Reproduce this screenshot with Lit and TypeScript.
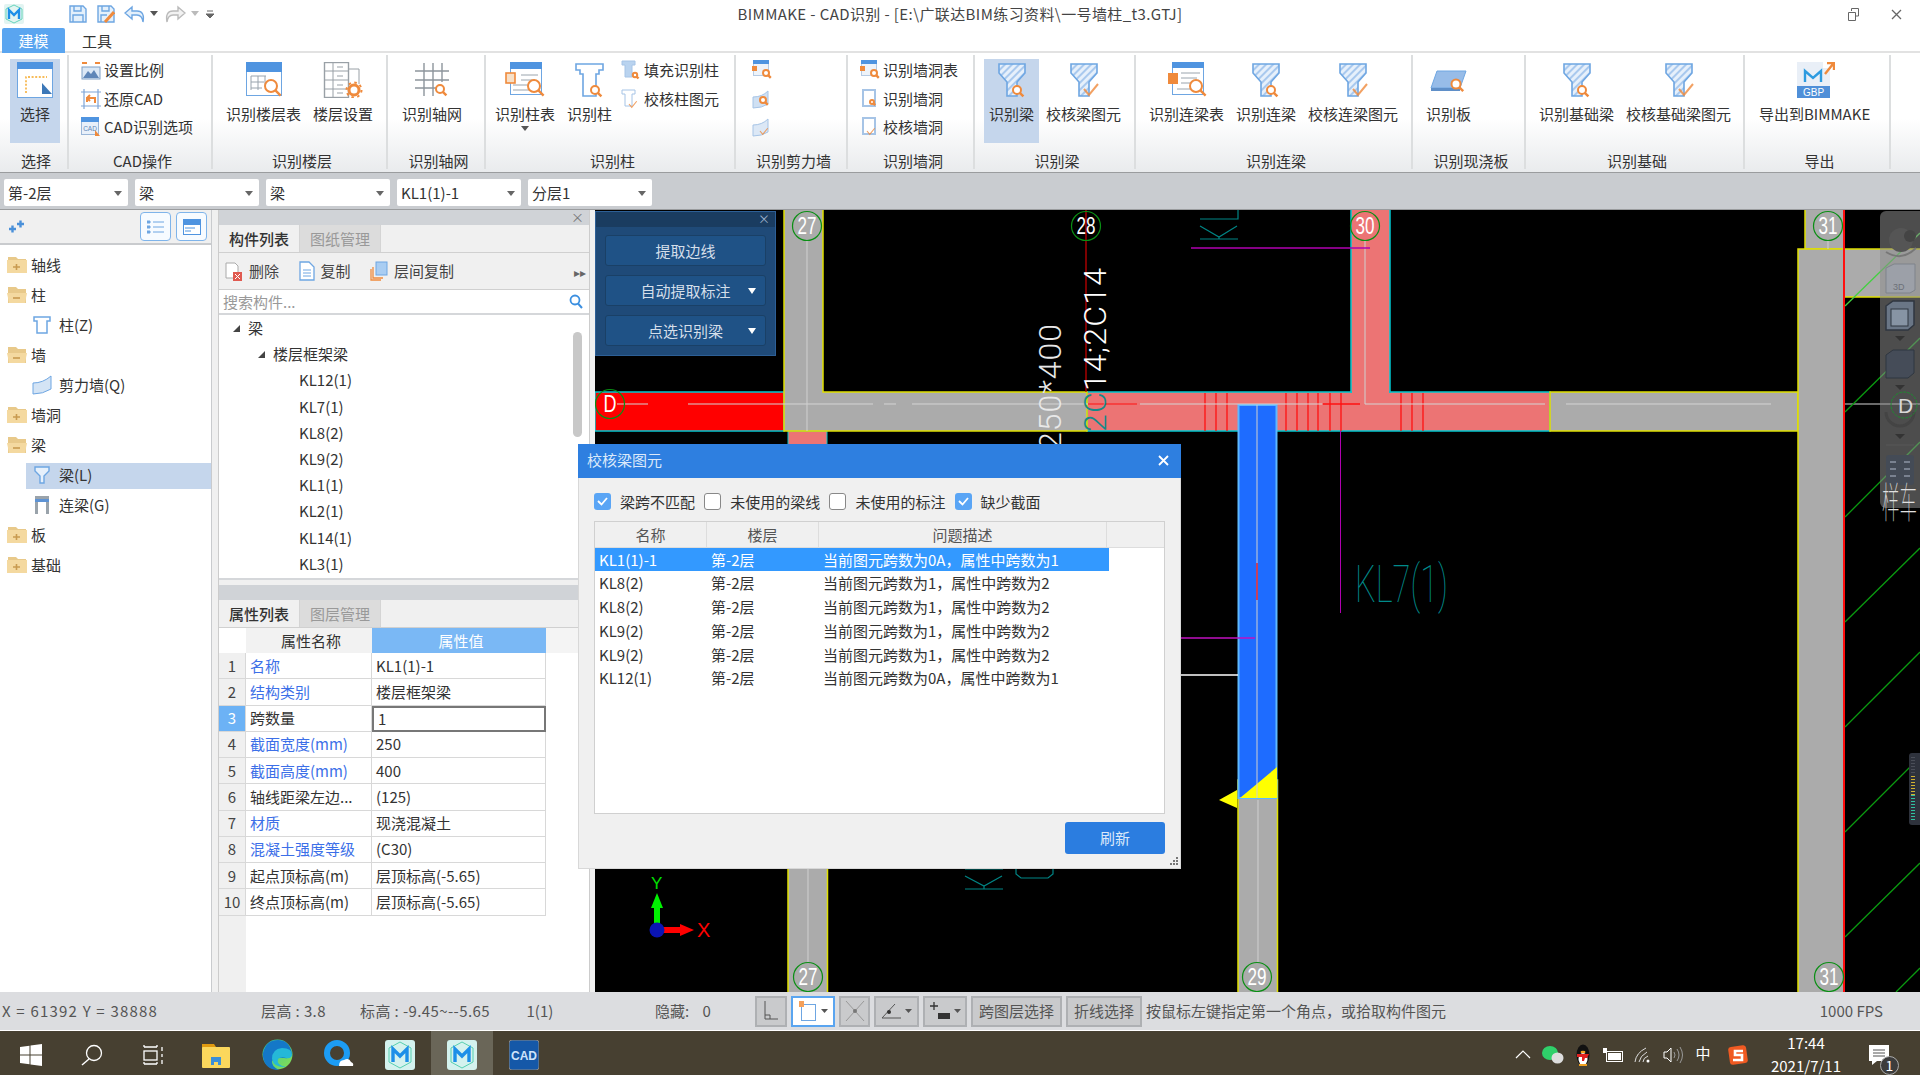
import { css, html, LitElement, svg } from 'lit'
import { customElement } from 'lit/decorators.js'
import { styleMap } from 'lit/directives/style-map.js'

const BLUE = '#6ea6e2'
const ORANGE = '#ef8a3c'

const mag = (x: number, y: number, r = 5) => svg`
  <circle cx=${x} cy=${y} r=${r} fill="#fff" stroke=${ORANGE} stroke-width="2" />
  <line x1=${x + r * 0.7} y1=${y + r * 0.7} x2=${x + r * 1.6} y2=${y + r * 1.6} stroke=${ORANGE} stroke-width="2.4" />
`
const tick = (x: number, y: number, s = 1) => svg`
  <polyline points="${x},${y} ${x + 5 * s},${y + 6 * s} ${x + 14 * s},${y - 5 * s}" fill="none" stroke=${ORANGE} stroke-width=${2 * s} opacity="0.8" />
`
const wrap = (w: number, h: number, inner: unknown) =>
  html`<svg width=${w} height=${h} viewBox="0 0 ${w} ${h}">${inner}</svg>`

const beamShape = (x = 6, y = 1) => svg`
  <defs>
    <pattern id="hatch" width="5" height="5" patternUnits="userSpaceOnUse" patternTransform="rotate(45)">
      <rect width="5" height="5" fill="#e6f0fb" /><rect width="2" height="5" fill="#a9c9ee" />
    </pattern>
  </defs>
  <path transform="translate(${x} ${y})" d="M1 1H27V10L19 19V33H9V19L1 10Z" fill="url(#hatch)" stroke=${BLUE} stroke-width="1.6" />
`
const columnShape = (x = 5, y = 1) => svg`
  <path transform="translate(${x} ${y})" d="M1 1H28V7H24V11H21V33H8V11H5V7H1Z" fill="#fff" stroke=${BLUE} stroke-width="1.6" />
`

const large: Record<string, () => unknown> = {
  select: () => wrap(40, 36, svg`
    <rect x="2.5" y="0.5" width="35" height="35" fill="#fff" stroke=${BLUE} />
    <rect x="2" y="0" width="36" height="7" fill="#4f94e0" />
    <path d="M11 31V15H32" fill="none" stroke="#f5a623" stroke-width="1.4" stroke-dasharray="2 1.6" />
    <path d="M27 21L37 32H27Z" fill="#3c78b8" />
  `),
  tableSearch: () => wrap(40, 36, svg`
    <rect x="2.5" y="0.5" width="35" height="33" fill="#fff" stroke=${BLUE} />
    <rect x="2" y="0" width="36" height="10" fill="#4f94e0" />
    <path d="M7 14H22M7 20H20M7 26H18M7 14V28M14 14V28M21 14V24" stroke="#9aa4ad" fill="none" />
    ${mag(27, 24, 6)}
  `),
  floor: () => wrap(40, 36, svg`
    <rect x="1.5" y="0.5" width="24" height="35" fill="#fff" stroke="#99a0a6" stroke-width="1.4" />
    <path d="M1 9H25M1 18H25M1 27H25M10 1V35M14 5H20M14 14H20M14 23H20M14 31H20M25 7H36V22" stroke="#99a0a6" fill="none" />
    <circle cx="31" cy="28" r="5" fill="#fff" stroke=${ORANGE} stroke-width="3" />
    <circle cx="31" cy="28" r="7.5" fill="none" stroke=${ORANGE} stroke-width="2" stroke-dasharray="2.5 3.4" />
  `),
  grid: () => wrap(40, 36, svg`
    <path d="M3 9H37M3 18H37M3 26H28M12 1V34M21 1V34M30 1V20" stroke="#8d959c" stroke-width="1.4" fill="none" />
    ${mag(28, 27, 4)}
  `),
  colTable: () => wrap(40, 36, svg`
    <rect x="5.5" y="0.5" width="31" height="32" fill="#fff" stroke=${BLUE} />
    <rect x="5" y="0" width="32" height="7" fill="#4f94e0" />
    <path d="M16 13H33M16 18H30M8 23H26M8 28H24" stroke="#9aa4ad" />
    <rect x="1" y="11" width="9" height="10" fill="#f7e0c8" stroke=${ORANGE} stroke-width="1.6" />
    ${mag(29, 24, 6)}
  `),
  column: () => wrap(40, 36, svg`${columnShape()}${mag(25, 28, 4)}`),
  beamFind: () => wrap(40, 36, svg`${beamShape()}${mag(25, 28, 4)}`),
  beamCheck: () => wrap(40, 36, svg`${beamShape()}${tick(20, 27)}`),
  linkTable: () => wrap(40, 36, svg`
    <rect x="5.5" y="0.5" width="31" height="32" fill="#fff" stroke=${BLUE} />
    <rect x="5" y="0" width="32" height="6" fill="#4f94e0" />
    <path d="M14 11H33M14 16H30M14 21H26M10 27H24" stroke="#9aa4ad" />
    <rect x="1" y="11" width="10" height="11" fill=${ORANGE} />
    ${mag(29, 24, 6)}
  `),
  slab: () => wrap(40, 36, svg`
    <path d="M8 9H37L31 26H2Z" fill="#97bce8" stroke=${BLUE} />
    <path d="M2 26H31V29H2Z" fill="#5f8fc8" />
    ${mag(27, 22, 4.5)}
  `),
  gbp: () => wrap(40, 36, svg`
    <path d="M2 0H28V6H35V36H2Z" fill="#e9eff7" />
    <rect x="2" y="24" width="33" height="12" fill="#4f8fd8" />
    <text x="18.5" y="33.5" text-anchor="middle" font-size="10" fill="#fff" font-family="Liberation Sans, sans-serif">GBP</text>
    <path d="M10 20V9L18 16L26 9V20" fill="none" stroke="#2d9be0" stroke-width="2.4" />
    <path d="M30 12L38 2M32 1H39V8" fill="none" stroke=${ORANGE} stroke-width="2.4" />
  `),
}

const small: Record<string, () => unknown> = {
  scale: () => wrap(20, 20, svg`
    <path d="M1 3H6M14 3H19" stroke=${ORANGE} stroke-width="2" />
    <rect x="1" y="7" width="18" height="12" fill="#dbe8f6" stroke="#7fa0c6" />
    <path d="M2 18L7 11L10 14L13 10L18 18Z" fill="#5e86b8" />
  `),
  restore: () => wrap(20, 20, svg`
    <path d="M0 3H20M3 0V20M0 17H20M17 0V20" stroke="#7fa6d8" stroke-width="1.2" />
    <path d="M6 13V9H14V14M6 9L9 6M6 9L9 12" fill="none" stroke=${ORANGE} stroke-width="2" />
  `),
  cadOpt: () => wrap(20, 20, svg`
    <rect x="0.5" y="0.5" width="17" height="17" fill="#e8f0fa" stroke="#9ab6d8" />
    <rect width="18" height="5" fill="#4f94e0" />
    <text x="9" y="14" text-anchor="middle" font-size="6.5" fill="#5e86b8" font-family="Liberation Sans, sans-serif">CAD</text>
    <path d="M14 13L19 19H14Z" fill=${ORANGE} />
  `),
  colFill: () => wrap(20, 20, svg`
    <path d="M1 1H14V5H11V17H4V5H1Z" fill="#b9d3ef" stroke="#a6c4e6" />${mag(14, 15, 2.2)}
  `),
  colCheck: () => wrap(20, 20, svg`
    <path d="M1 1H14V5H11V17H4V5H1Z" fill="#fff" stroke="#a6c4e6" />${tick(8, 15, 0.55)}
  `),
  shearTable: () => wrap(20, 20, svg`
    <rect x="1.5" y="0.5" width="15" height="15" fill="#eef3f9" stroke="#b6cbe4" />
    <rect x="1" width="16" height="4" fill="#4f94e0" />
    <rect y="6" width="5" height="5" fill=${ORANGE} />${mag(14, 13, 3)}
  `),
  wall: () => wrap(20, 20, svg`
    <path d="M1 8Q10 8 16 2V15Q10 19 1 19Z" fill="#cfe0f3" stroke="#a6c4e6" />${mag(11, 11, 3)}
  `),
  wallCheck: () => wrap(20, 20, svg`
    <path d="M1 8Q10 8 16 2V15Q10 19 1 19Z" fill="#dce8f6" stroke="#a6c4e6" />${tick(8, 14, 0.55)}
  `),
  hole: () => wrap(20, 20, svg`
    <path d="M3 1H15V17H3Z" fill="#fff" stroke="#a6c4e6" stroke-width="2" />${mag(12, 13, 2)}
  `),
  holeCheck: () => wrap(20, 20, svg`
    <path d="M3 1H15V17H3Z" fill="#fff" stroke="#a6c4e6" stroke-width="2" />${tick(7, 14, 0.55)}
  `),
}

interface RibbonItem {
  kind: 'large' | 'small'
  icon?: string
  label?: string
  active?: boolean
  caret?: boolean
}
type RibbonEntry = RibbonItem | RibbonItem[]

const L = (label: string, icon: string, extra: Partial<RibbonItem> = {}): RibbonItem => ({ kind: 'large', label, icon, ...extra })
const S = (icon: string, label = ''): RibbonItem => ({ kind: 'small', icon, label })

const ribbon: { label: string; width: number; pad: number; items: RibbonEntry[] }[] = [
  { label: '选择', width: 69, pad: 10, items: [L('选择', 'select', { active: true })] },
  { label: 'CAD操作', width: 144, pad: 6, items: [[S('scale', '设置比例'), S('restore', '还原CAD'), S('cadOpt', 'CAD识别选项')]] },
  { label: '识别楼层', width: 175, pad: 8, items: [L('识别楼层表', 'tableSearch'), L('楼层设置', 'floor')] },
  { label: '识别轴网', width: 98, pad: 9, items: [L('识别轴网', 'grid')] },
  { label: '识别柱', width: 250, pad: 4, items: [L('识别柱表', 'colTable', { caret: true }), L('识别柱', 'column'), [S('colFill', '填充识别柱'), S('colCheck', '校核柱图元')]] },
  { label: '识别剪力墙', width: 112, pad: 10, items: [[S('shearTable'), S('wall'), S('wallCheck')]] },
  { label: '识别墙洞', width: 127, pad: 6, items: [[S('shearTable', '识别墙洞表'), S('hole', '识别墙洞'), S('holeCheck', '校核墙洞')]] },
  { label: '识别梁', width: 161, pad: 9, items: [L('识别梁', 'beamFind', { active: true }), L('校核梁图元', 'beamCheck')] },
  { label: '识别连梁', width: 277, pad: 8, items: [L('识别连梁表', 'linkTable'), L('识别连梁', 'beamFind'), L('校核连梁图元', 'beamCheck')] },
  { label: '识别现浇板', width: 113, pad: 8, items: [L('识别板', 'slab')] },
  { label: '识别基础', width: 219, pad: 8, items: [L('识别基础梁', 'beamFind'), L('校核基础梁图元', 'beamCheck')] },
  { label: '导出', width: 146, pad: 9, items: [L('导出到BIMMAKE', 'gbp')] },
]

const selects = ['第-2层', '梁', '梁', 'KL1(1)-1', '分层1']

const tree = [
  { label: '轴线', open: false },
  { label: '柱', open: true },
  { label: '柱(Z)', child: 'col' },
  { label: '墙', open: true },
  { label: '剪力墙(Q)', child: 'wall' },
  { label: '墙洞', open: false },
  { label: '梁', open: true },
  { label: '梁(L)', child: 'beam', selected: true },
  { label: '连梁(G)', child: 'link' },
  { label: '板', open: false },
  { label: '基础', open: false },
]

const parts = ['KL12(1)', 'KL7(1)', 'KL8(2)', 'KL9(2)', 'KL1(1)', 'KL2(1)', 'KL14(1)', 'KL3(1)']

const props = [
  ['名称', 'KL1(1)-1', true],
  ['结构类别', '楼层框架梁', true],
  ['跨数量', '1', false],
  ['截面宽度(mm)', '250', true],
  ['截面高度(mm)', '400', true],
  ['轴线距梁左边...', '(125)', false],
  ['材质', '现浇混凝土', true],
  ['混凝土强度等级', '(C30)', true],
  ['起点顶标高(m)', '层顶标高(-5.65)', false],
  ['终点顶标高(m)', '层顶标高(-5.65)', false],
] as const

const issues = [
  ['KL1(1)-1', '第-2层', '当前图元跨数为0A，属性中跨数为1'],
  ['KL8(2)', '第-2层', '当前图元跨数为1，属性中跨数为2'],
  ['KL8(2)', '第-2层', '当前图元跨数为1，属性中跨数为2'],
  ['KL9(2)', '第-2层', '当前图元跨数为1，属性中跨数为2'],
  ['KL9(2)', '第-2层', '当前图元跨数为1，属性中跨数为2'],
  ['KL12(1)', '第-2层', '当前图元跨数为0A，属性中跨数为1'],
]

const checks: [string, boolean][] = [
  ['梁跨不匹配', true],
  ['未使用的梁线', false],
  ['未使用的标注', false],
  ['缺少截面', true],
]

const folder = (open: boolean) => wrap(20, 20, svg`
  <path d="M1 2H9L11 4H19V18H1Z" fill="#e8c98a" />
  <path d=${open ? 'M0 8H20L18 18H2Z' : 'M0 5H20V18H0Z'} fill="#f4d9a0" />
  <path d=${open ? 'M6 13H13' : 'M6 12H13M9.5 9V15'} stroke="#c89a50" stroke-width="1.6" />
`)

const childIcon = (kind?: string) => {
  if (kind === 'col') return wrap(20, 20, svg`<path d="M2 2H18V6H15V18H5V6H2Z" fill="#fff" stroke=${BLUE} stroke-width="1.5" />`)
  if (kind === 'wall') return wrap(20, 20, svg`<path d="M1 8Q11 8 19 1V14Q11 19 1 19Z" fill="#d4e4f5" stroke=${BLUE} />`)
  if (kind === 'beam') return wrap(20, 20, svg`<path d="M3 2H17V6L12 11V18H8V11L3 6Z" fill="#e6f0fb" stroke=${BLUE} stroke-width="1.4" />`)
  return wrap(20, 20, svg`<path d="M3 1H17V19H14V7H6V19H3Z" fill="#9aa3ab" /><rect x="3" y="4" width="14" height="3" fill="#5e93d4" />`)
}

const bubble = (x: number, y: number, t: string, r = 14.5, tw = 19) => svg`
  <circle cx=${x} cy=${y} r=${r} fill="none" stroke="#0a8f14" stroke-width="1.2" />
  <text x=${x - tw / 2} y=${y + 8} font-size="23" fill="#fff" textLength=${tw} lengthAdjust="spacingAndGlyphs" font-family="Liberation Sans, sans-serif">${t}</text>
`

const taskApp = () => html`
  <svg width="30" height="30" viewBox="0 0 30 30">
    <rect width="30" height="30" rx="3" fill="#d4f2ee" />
    <path d="M15 2L26 8V22L15 28L4 22V8Z" fill="none" stroke="#57d0b0" />
    <path d="M8 22V9L15 16L22 9V22" fill="none" stroke="#1d8fe8" stroke-width="3.4" />
  </svg>
`

@customElement('app-root')
export class AppRoot extends LitElement {
  static styles = css`
    :host {
      position: relative;
      display: flex;
      flex-direction: column;
      width: 1920px;
      height: 1075px;
      overflow: hidden;
      background: #f0f0f0;
      color: #333;
      font: 15px/20px 'Noto Sans CJK SC', 'Liberation Sans', sans-serif;
      white-space: nowrap;
    }
    svg { display: block; flex: none; }

    .titlebar {
      display: grid;
      grid-template-columns: 1fr auto 1fr;
      align-items: center;
      height: 28px;
      background: #fff;
    }
    .quick { display: flex; align-items: center; padding-left: 4px; }
    .title { font-size: 15px; color: #444; letter-spacing: 0.4px; }
    .winbtns { display: flex; justify-content: flex-end; align-items: center; gap: 32px; padding-right: 18px; }

    .tabs { display: flex; height: 25px; background: #fff; padding-left: 2px; border-bottom: 2px solid #e2e2e2; box-sizing: border-box; }
    .tab { width: 63px; text-align: center; line-height: 25px; height: 25px; }
    .tab.on { background: #5aa5f0; color: #fff; border-radius: 2px 2px 0 0; }
    .tab.off { width: 52px; margin-left: 6px; }

    .ribbon {
      display: flex;
      height: 120px;
      background: linear-gradient(#fff 0 55%, #e9ebed);
      border-bottom: 1px solid #9a9c9e;
      box-sizing: border-box;
    }
    .group { display: flex; flex-direction: column; flex: none; box-sizing: border-box; border-right: 2px solid #dcdedf; margin: 2px 0 3px; }
    .group-body { display: flex; flex: none; height: 88px; padding-top: 4px; box-sizing: border-box; }
    .group-label { flex: none; text-align: center; line-height: 20px; margin-top: 8px; padding-left: 5px; color: #333; }
    .big {
      position: relative;
      display: flex;
      flex-direction: column;
      align-items: center;
      flex: none;
      height: 84px;
      padding: 3px 5px 0;
      box-sizing: border-box;
    }
    .big + .big { margin-left: 2px; }
    .big + .smalls { margin-left: -2px; }
    .big.on { background: #c5d6ec; }
    .big span { margin-top: 6px; }
    .caret { position: absolute; left: 50%; top: 67px; margin-left: -4px; width: 0; height: 0; border: 4px solid transparent; border-top: 5px solid #555; }
    .smalls { display: flex; flex-direction: column; gap: 8.5px; padding: 1px 0 0 6px; }
    .small { display: flex; align-items: center; gap: 3px; height: 20px; }

    .selectbar { display: flex; gap: 7px; height: 37px; padding: 6px 4px 3px; background: #c9ccd0; border-bottom: 1px solid #9a9c9e; box-sizing: border-box; }
    .select { position: relative; width: 124px; background: #fff; border-radius: 2px; line-height: 28px; padding-left: 4px; box-sizing: border-box; }
    .select i { position: absolute; right: 6px; top: 12px; border: 4px solid transparent; border-top: 5px solid #666; }

    .main { display: flex; height: 782px; }
    .left { width: 211px; flex: none; display: flex; flex-direction: column; border-right: 1px solid #c9cbce; box-sizing: content-box; margin-right: 6px; }
    .left-head { display: flex; align-items: center; height: 35px; padding: 0 4px 0 8px; background: #f0f0f0; border-bottom: 2px solid #c9cbce; box-sizing: border-box; }
    .head-btn { width: 31px; height: 29px; margin-left: 5px; border: 1px solid #7fb4ea; border-radius: 4px; box-sizing: border-box; display: flex; align-items: center; justify-content: center; background: #f7fbff; }
    .head-btn:first-of-type { margin-left: auto; }
    .left-tree { flex: 1; background: #fff; padding-top: 5px; }
    .t-row { display: flex; align-items: center; gap: 4px; height: 30px; padding-left: 7px; }
    .t-row.child { padding-left: 32px; gap: 7px; }
    .t-row.sel { position: relative; background: linear-gradient(#c5d6ec, #c5d6ec) 26px 3px / 185px 26px no-repeat; }

    .mid { width: 372px; flex: none; display: flex; flex-direction: column; margin-right: 5px; background: #f0f0f0; border-left: 1px solid #ccc; border-right: 1px solid #ccc; box-sizing: border-box; }
    .mid-title { position: relative; height: 15px; background: #d0d3d7; flex: none; }
    .mid-title b { position: absolute; right: 5px; top: -3px; font-weight: 400; font-size: 13px; color: #777; }
    .mid-tabs { display: flex; height: 28px; background: #f0f0f0; border-bottom: 1px solid #d0d0d0; flex: none; box-sizing: border-box; }
    .mid-tab { width: 81px; text-align: center; line-height: 27px; border-right: 1px solid #d4d4d4; box-sizing: border-box; font-weight: 500; }
    .mid-tab.off { background: #dcdcdc; color: #999; font-weight: 400; }
    .tools { display: flex; align-items: center; height: 37px; padding-left: 6px; color: #444; flex: none; position: relative; box-sizing: border-box; border-bottom: 1px solid #d0d0d0; }
    .tool { display: flex; align-items: center; gap: 6px; margin-right: 19.5px; }
    .more { position: absolute; right: 3px; top: 9px; font-size: 12px; color: #666; }
    .search { display: flex; align-items: center; justify-content: space-between; height: 25px; padding: 0 6px 0 4px; background: #fff; color: #999; border-bottom: 2px solid #d5d7da; flex: none; box-sizing: border-box; }
    .part-tree { position: relative; height: 265px; background: #fff; border-bottom: 2px solid #d5d7da; box-sizing: border-box; padding-top: 0; overflow: hidden; flex: none; }
    .p-row { display: flex; align-items: center; height: 26.2px; gap: 8px; }
    .arrow { width: 0; height: 0; border-left: 7px solid transparent; border-bottom: 7px solid #444; }
    .scroll { position: absolute; right: 7px; top: 17px; width: 9px; height: 105px; border-radius: 5px; background: #c8c8c8; }
    .split { height: 5px; background: #f0f0f0; flex: none; }

    .prop { display: grid; grid-template-columns: 27px 126px 174px 1fr; grid-template-rows: 25px; grid-auto-rows: 26.26px; flex: none; background: #fff; }
    .prop > div { display: flex; align-items: center; box-sizing: border-box; padding-left: 4px; border-bottom: 1px solid #d8d8d8; border-right: 1px solid #d8d8d8; color: #333; }
    .prop .corner { background: #fff; border: 0; }
    .prop .hn { justify-content: center; background: #f2f2f2; border: 0; }
    .prop .hv { justify-content: center; background: #7ab8f5; color: #fff; border: 0; }
    .prop .fill { background: #f4f4f4; border: 0; }
    .prop .rest { border: 0; background: #fff; }
    .prop .num { justify-content: center; padding: 0; background: #f0f0f0; color: #444; }
    .prop .num.sel { background: #6cb2f5; color: #fff; }
    .prop .link { color: #3c6fe8; }
    .prop .edit { border: 2px solid #777; }
    .prop-rest { flex: 1; background: linear-gradient(90deg, #f0f0f0 27px, #fff 27px); }

    .canvas { position: relative; flex: 1; background: #000; overflow: hidden; border-top: 0; }
    .float { position: absolute; left: 0; top: 1px; width: 181px; height: 145px; background: #1f4a78; border: 1px solid #2d5f96; box-sizing: border-box; color: #d5dfea; }
    .float-head { position: relative; height: 15px; background: #1a3c60; }
    .float-head b { position: absolute; right: 5px; top: -3px; font-weight: 400; font-size: 12px; color: #9cb3cc; }
    .float-btns { display: flex; flex-direction: column; gap: 9px; padding: 8px 9px 0; }
    .float-btn { position: relative; height: 31px; line-height: 30px; text-align: center; border-radius: 3px; background: #1f5286; border: 1px solid #1a4066; box-sizing: border-box; }
    .float-btn i { position: absolute; right: 9px; top: 12px; border: 4px solid transparent; border-top: 6px solid #fff; }

    .status { display: flex; align-items: center; height: 38px; background: #dcdde0; color: #555; flex: none; border-bottom: 1px solid #fff; box-sizing: content-box; }
    .st-a { width: 259px; padding-left: 2px; letter-spacing: 1.2px; }
    .st-b { width: 99px; letter-spacing: 0.4px; }
    .st-c { width: 166.5px; letter-spacing: 0.4px; }
    .st-d { width: 128.5px; }
    .st-e { width: 100px; }
    .sbtn { display: flex; align-items: center; justify-content: center; height: 31px; margin-right: 4px; background: #c9cacc; border: 2px solid #aeb0b3; box-sizing: border-box; color: #555; gap: 4px; }
    .sbtn.on { background: #fff; border-color: #5aa5f0; }
    .fps { margin-left: auto; padding-right: 37px; }

    .taskbar { display: flex; align-items: center; height: 44px; background: #474031; color: #fff; flex: none; }
    .cell { display: flex; align-items: center; justify-content: center; width: 61.6px; height: 44px; flex: none; }
    .cell svg { margin-top: 3px; }
    .cell.on { background: #6a6658; }
    .tray { display: flex; align-items: center; margin-left: auto; padding-right: 21px; }
    .tray > div { display: flex; align-items: center; justify-content: center; width: 30px; height: 44px; }
    .tray > div svg { margin-top: 3px; }
    .tray .sogou { margin-left: 5px; }
    .tray .clock { display: block; width: 106px; text-align: center; line-height: 23px; padding-top: 0; }
    .tray .note { position: relative; width: 40px; }
    .badge { position: absolute; left: 21px; top: 25px; width: 17px; height: 17px; border: 1px solid #aaa; border-radius: 50%; background: #3c3c3c; font-size: 14px; line-height: 17px; text-align: center; }

    .dialog { position: absolute; left: 578px; top: 444px; width: 603px; height: 425px; display: flex; flex-direction: column; background: #f0f0f0; border: 1px solid #d8d8d8; box-sizing: border-box; }
    .dlg-title { display: flex; align-items: center; justify-content: space-between; flex: none; height: 34px; padding: 0 12px 2px 9px; background: #2e7fe0; color: #dbe9fa; margin: -1px -1px 0; box-sizing: border-box; }
    .dlg-checks { display: flex; align-items: center; height: 37.5px; margin-top: 5px; padding-left: 15px; flex: none; }
    .chk { display: flex; align-items: center; gap: 9px; color: #333; }
    .chk + .chk { margin-left: 9.2px; }
    .box { width: 17px; height: 17px; border: 1px solid #888; border-radius: 3px; background: #fff; box-sizing: border-box; }
    .box.on { border: 0; background: #5aa5f5; display: flex; align-items: center; justify-content: center; }
    .dlg-table { width: 571px; height: 293px; margin: 0 0 0 15px; background: #fff; border: 1px solid #d0d0d0; box-sizing: border-box; flex: none; }
    .d-head { display: grid; grid-template-columns: 112px 112px 288px 1fr; height: 26px; background: #f0f0f0; border-bottom: 1px solid #ddd; box-sizing: border-box; }
    .d-head div { text-align: center; line-height: 25px; border-right: 1px solid #ddd; color: #555; }
    .d-head div:last-child { border: 0; }
    .d-row { display: grid; grid-template-columns: 112px 112px 1fr; width: 514px; height: 23.8px; line-height: 23.8px; padding-left: 4px; box-sizing: border-box; color: #333; }
    .d-row.sel { background: #3399ff; color: #fff; }
    .d-foot { display: flex; justify-content: flex-end; padding: 8px 15px 0 0; }
    .refresh { width: 100px; height: 32px; line-height: 32px; text-align: center; background: #2b7de0; border-radius: 3px; color: #dbe9fa; }
    .grip { position: absolute; right: 2px; bottom: 2px; }
  `

  private renderRibbonItem(item: RibbonItem) {
    return html`
      <div class="big ${item.active ? 'on' : ''}">
        ${large[item.icon!]()}
        <span>${item.label}</span>
        ${item.caret ? html`<i class="caret"></i>` : null}
      </div>
    `
  }

  private renderSmalls(items: RibbonItem[]) {
    return html`
      <div class="smalls">
        ${items.map((i) => html`<div class="small">${small[i.icon!]()}${i.label ? html`<span>${i.label}</span>` : null}</div>`)}
      </div>
    `
  }

  private renderTop() {
    return html`
      <div class="titlebar">
        <div class="quick">
          <svg width="20" height="20" viewBox="0 0 20 20">
            <rect width="20" height="20" rx="2" fill="#e2f4f1" />
            <path d="M10 1L18 5V15L10 19L2 15V5Z" fill="none" stroke="#66d4bb" />
            <path d="M5 15V6L10 11L15 6V15" fill="none" stroke="#1d8fe8" stroke-width="2.4" />
          </svg>
          <svg style="margin-left:45px" width="18" height="18" viewBox="0 0 18 18">
            <path d="M1 1H14L17 4V17H1Z" fill="#e4f0fb" stroke="#6ea6e2" stroke-width="1.4" />
            <path d="M5 1V6H12V1M4 17V10H14V17" fill="none" stroke="#6ea6e2" stroke-width="1.4" />
          </svg>
          <svg style="margin-left:10px" width="18" height="18" viewBox="0 0 18 18">
            <path d="M1 1H14L17 4V17H1Z" fill="#e4f0fb" stroke="#6ea6e2" stroke-width="1.4" />
            <path d="M5 1V6H12V1M4 17V10H10" fill="none" stroke="#6ea6e2" stroke-width="1.4" />
            <path d="M8 17L17 7" stroke="#ef8a3c" stroke-width="3" />
          </svg>
          <svg style="margin-left:9px" width="21" height="18" viewBox="0 0 21 18">
            <path d="M8 2L1 8L8 14V10H13Q18 10 19 17Q21 6 13 6H8Z" fill="#e4f0fb" stroke="#6ea6e2" stroke-width="1.4" />
          </svg>
          <svg style="margin-left:5px" width="8" height="6" viewBox="0 0 8 6"><path d="M0 0H8L4 5Z" fill="#555" /></svg>
          <svg style="margin-left:7px" width="21" height="18" viewBox="0 0 21 18">
            <path d="M13 2L20 8L13 14V10H8Q3 10 2 17Q0 6 8 6H13Z" fill="#f2f2f2" stroke="#bbb" stroke-width="1.4" />
          </svg>
          <svg style="margin-left:5px" width="8" height="6" viewBox="0 0 8 6"><path d="M0 0H8L4 5Z" fill="#bbb" /></svg>
          <svg style="margin-left:7px" width="8" height="9" viewBox="0 0 8 9"><path d="M1 1H7M0 4H8L4 8Z" stroke="#666" fill="#666" /></svg>
        </div>
        <div class="title">BIMMAKE - CAD识别 - [E:\\广联达BIM练习资料\\一号墙柱_t3.GTJ]</div>
        <div class="winbtns">
          <svg width="11" height="13" viewBox="0 0 11 13"><path d="M3.5 3V.5H10.5V8H7.5M.5 4.5H7.5V12.5H.5Z" fill="none" stroke="#666" /></svg>
          <svg width="11" height="11" viewBox="0 0 11 11"><path d="M1 1L10 10M10 1L1 10" stroke="#666" stroke-width="1.3" /></svg>
        </div>
      </div>
      <div class="tabs"><div class="tab on">建模</div><div class="tab off">工具</div></div>
      <div class="ribbon">
        ${ribbon.map(
          (g) => html`
            <div class="group" style=${styleMap({ width: `${g.width}px` })}>
              <div class="group-body" style=${styleMap({ paddingLeft: `${g.pad}px` })}>
                ${g.items.map((it) => (Array.isArray(it) ? this.renderSmalls(it) : this.renderRibbonItem(it)))}
              </div>
              <div class="group-label">${g.label}</div>
            </div>
          `,
        )}
      </div>
      <div class="selectbar">${selects.map((s) => html`<div class="select">${s}<i></i></div>`)}</div>
    `
  }

  private renderLeft() {
    return html`
      <div class="left">
        <div class="left-head">
          <svg width="16" height="14" viewBox="0 0 16 14"><path d="M1 9H8M4.500 5.500V12.500M9 4H16M12.500 .5V7.500" stroke="#4a90d9" stroke-width="2.400" /></svg>
          <div class="head-btn">
            <svg width="17" height="16" viewBox="0 0 17 16"><path d="M0 2H3V4H0ZM0 7H3V9H0ZM0 12H3V14H0ZM6 3H17M6 8H17M6 13H17" fill="#6ea6e2" stroke="#6ea6e2" /></svg>
          </div>
          <div class="head-btn">
            <svg width="18" height="16" viewBox="0 0 18 16"><rect x=".5" y=".5" width="17" height="15" fill="#fff" stroke="#4f94e0" /><rect width="18" height="6" fill="#4f94e0" /><path d="M2 9H12M2 12H8" stroke="#4f94e0" /></svg>
          </div>
        </div>
        <div class="left-tree">
          ${tree.map((t) =>
            t.child
              ? html`<div class="t-row child ${t.selected ? 'sel' : ''}">${childIcon(t.child)}<span>${t.label}</span></div>`
              : html`<div class="t-row">${folder(!!t.open)}<span>${t.label}</span></div>`,
          )}
        </div>
      </div>
    `
  }

  private renderMid() {
    return html`
      <div class="mid">
        <div class="mid-title"><b>×</b></div>
        <div class="mid-tabs"><div class="mid-tab">构件列表</div><div class="mid-tab off">图纸管理</div></div>
        <div class="tools">
          <div class="tool">
            <svg width="18" height="20" viewBox="0 0 18 20"><path d="M1 2H10L13 5V17H1Z" fill="#fff" stroke="#aaa" /><rect x="8" y="11" width="9" height="9" fill="#e05a50" /><path d="M10 13L15 18M15 13L10 18" stroke="#fff" /></svg>
            <span>删除</span>
          </div>
          <div class="tool">
            <svg width="16" height="20" viewBox="0 0 16 20"><path d="M1 1H10L15 6V19H1Z" fill="#fff" stroke="#6ea6e2" stroke-width="1.300" /><path d="M4 9H12M4 12H12M4 15H12" stroke="#6ea6e2" /></svg>
            <span>复制</span>
          </div>
          <div class="tool">
            <svg width="18" height="20" viewBox="0 0 18 20"><path d="M3 6V17H13M1 8V19H11" fill="none" stroke="#ef8a3c" stroke-width="1.300" /><rect x="6" y="1" width="11" height="13" fill="#a9cdf2" stroke="#6ea6e2" /></svg>
            <span>层间复制</span>
          </div>
          <span class="more">▸▸</span>
        </div>
        <div class="search">
          <span>搜索构件...</span>
          <svg width="14" height="15" viewBox="0 0 14 15"><circle cx="6" cy="6" r="4.500" fill="none" stroke="#3b8fe0" stroke-width="1.800" /><path d="M9 9.500L13 14" stroke="#3b8fe0" stroke-width="2" /></svg>
        </div>
        <div class="part-tree">
          <div class="p-row" style=${styleMap({ paddingLeft: '14px' })}><i class="arrow"></i><span>梁</span></div>
          <div class="p-row" style=${styleMap({ paddingLeft: '39px' })}><i class="arrow"></i><span>楼层框架梁</span></div>
          ${parts.map((p) => html`<div class="p-row" style=${styleMap({ paddingLeft: '80px' })}>${p}</div>`)}
          <div class="scroll"></div>
        </div>
        <div class="split"></div>
        <div class="mid-title"><b>›</b></div>
        <div class="mid-tabs"><div class="mid-tab">属性列表</div><div class="mid-tab off">图层管理</div></div>
        <div class="prop">
          <div class="corner"></div><div class="hn">属性名称</div><div class="hv">属性值</div><div class="fill"></div>
          ${props.map(
            ([n, v, link], i) => html`
              <div class="num ${i === 2 ? 'sel' : ''}">${i + 1}</div>
              <div class=${link ? 'link' : ''}>${n}</div>
              <div class=${i === 2 ? 'edit' : ''}>${v}</div>
              <div class="rest"></div>
            `,
          )}
        </div>
        <div class="prop-rest"></div>
      </div>
    `
  }

  private renderCad() {
    const cad = 'Liberation Sans, sans-serif'
    const hatch = [1205, 1216, 1227, 1286, 1297, 1308, 1318, 1330, 1341, 1401, 1412, 1423]
    const greens = [
      [1845, 412, 1920, 338], [1845, 517, 1920, 442], [1845, 622, 1920, 548],
      [1845, 727, 1920, 652], [1845, 832, 1920, 757], [1845, 937, 1920, 863], [1896, 992, 1920, 968],
    ]
    return svg`
      <rect x="595" y="392" width="189" height="39" fill="#ff0000" stroke="#00c8d0" stroke-width="1.500" />
      <rect x="1087" y="392" width="463" height="39" fill="#ec7474" stroke="#00c8d0" stroke-width="1.500" />
      <rect x="1351" y="205" width="39" height="187" fill="#ec7474" stroke="#00c8d0" stroke-width="1.500" />
      <rect x="1352" y="385" width="37" height="12" fill="#ec7474" />
      <rect x="788" y="431" width="39" height="20" fill="#ec7474" stroke="#00c8d0" />
      <path d="M784 205V431H1087V392H823V205" fill="#ababab" stroke="#e0e000" stroke-width="1.500" />
      <rect x="1550" y="392" width="248" height="39" fill="#ababab" stroke="#e0e000" stroke-width="1.500" />
      <rect x="1805" y="205" width="39" height="44" fill="#ababab" stroke="#e0e000" stroke-width="1.500" />
      <rect x="1844" y="249" width="80" height="48" fill="#ababab" stroke="#e0e000" stroke-width="1.500" />
      <rect x="1798" y="249" width="46" height="750" fill="#ababab" stroke="#e0e000" stroke-width="1.500" />
      <line x1="1844" y1="205" x2="1844" y2="992" stroke="#ff1010" stroke-width="2" />
      <rect x="788" y="860" width="39.500" height="140" fill="#ababab" stroke="#e0e000" stroke-width="1.500" />
      <rect x="1238" y="780" width="39.500" height="220" fill="#ababab" stroke="#e0e000" stroke-width="1.500" />
      <rect x="1238.500" y="405" width="38" height="393" fill="#1e6cff" stroke="#5db8ff" stroke-width="2" />
      <path d="M1240 798L1277 767V798Z" fill="#ffff00" />
      <path d="M1219 800L1237 790V808Z" fill="#ffff00" />

      ${hatch.map((x) => svg`<line x1=${x} y1="393" x2=${x} y2="431" stroke="#ff1010" stroke-width="1.300" />`)}
      <path d="M1323 404H1360" stroke="#ff1010" stroke-width="1.300" />
      <path d="M1088 404H1137" stroke="#ff1010" stroke-width="1" />
      <path d="M617 404H648M688 404H873M884 404H896M912 404H1088M1140 404H1322M1365 404H1545M1566 404H1771M1845 404H1920" stroke="#d4d4d4" stroke-width="1" />
      <path d="M807 240V431M1365 240V404M808 868V962M1257 405V798M1258 800V962M1828 240V249" stroke="#d0d0d0" stroke-width="1" />
      <path d="M1086 205V392" stroke="#c00000" stroke-width="1.300" />
      <path d="M1191 248H1370" stroke="#b000b0" stroke-width="1.500" />
      <path d="M1340.500 431V613" stroke="#b000b0" stroke-width="1" />
      <path d="M1181 638H1255" stroke="#c010c0" stroke-width="1.300" />
      <path d="M1181 675H1238" stroke="#fff" stroke-width="1.500" />
      <path d="M1257 563V600" stroke="#e02030" stroke-width="1.500" />
      ${greens.map(([a, b, c, d]) => svg`<line x1=${a} y1=${b} x2=${c} y2=${d} stroke="#0a9a10" stroke-width="1.300" />`)}
      <line x1="1845" y1="306" x2="1920" y2="233" stroke="#42d040" stroke-width="1.300" />

      <g stroke="#008585" fill="none" stroke-width="1.200">
        <path d="M1200 219H1238V210M1200 239H1238M1200 226L1219 237L1237 226M1219 237V239" />
        <path d="M965 869H1003M965 889H1003M965 876L984 886L1002 876M984 886V889" />
        <path d="M1016 869V874L1021 878H1048L1053 874V869" />
      </g>
      <text x="1355" y="602" font-size="52" font-weight="100" fill="#008a8a" textLength="93" lengthAdjust="spacingAndGlyphs" font-family="Roboto, sans-serif">KL7(1)</text>
      <text transform="translate(1061 450) rotate(-90)" font-size="32" font-weight="300" fill="#e8e8e8" font-family="Roboto, ${cad}" letter-spacing="1">250*400</text>
      <text transform="translate(1106 432) rotate(-90)" font-size="32" font-weight="300" fill="#fff" font-family="Roboto, ${cad}" letter-spacing="1.200"><tspan fill="#148a8a">2C</tspan>14;2C14</text>

      ${bubble(807, 226, '27')}${bubble(1086, 226, '28')}${bubble(1365, 226, '30')}${bubble(1828, 226, '31')}
      ${bubble(610, 404, 'D', 14.5, 13)}${bubble(808, 977, '27')}${bubble(1257, 977, '29')}${bubble(1829, 977, '31')}

      <rect x="654" y="905" width="6" height="25" fill="#00f000" />
      <path d="M657 893L651 908H663Z" fill="#00f000" />
      <rect x="660" y="927" width="22" height="6" fill="#ff0000" />
      <path d="M694 930L680 924V936Z" fill="#ff0000" />
      <circle cx="657" cy="930" r="7.500" fill="#0a14b4" />
      <text x="651" y="889" font-size="17" fill="#00e000" font-family=${cad}>Y</text>
      <text x="697" y="937" font-size="20" fill="#ff0000" font-family=${cad}>X</text>

      <rect x="1880" y="211" width="50" height="297" rx="6" fill="#8c8c8c" fill-opacity="0.55" />
      <circle cx="1901" cy="240" r="12" fill="#555" /><circle cx="1910" cy="236" r="6" fill="#444" />
      <path d="M1886 252Q1902 262 1916 248" stroke="#777" fill="none" stroke-width="2" />
      <path d="M1886 268L1894 264H1915V290L1910 293H1886Z" fill="#9ca0a8" stroke="#7e838b" />
      <text x="1893" y="290" font-size="9" fill="#6c7078" font-family=${cad}>3D</text>
      <path d="M1886 306L1893 301H1914V325L1908 330H1886Z" fill="#6a7686" stroke="#2f3640" stroke-width="1.500" />
      <rect x="1891" y="309" width="17" height="17" fill="#8794a4" stroke="#2f3640" />
      <path d="M1895 336H1905L1900 341Z" fill="#333" />
      <path d="M1886 355L1893 350H1914V373L1908 378H1886Z" fill="#454c58" stroke="#2f3640" />
      <path d="M1895 385H1905L1900 390Z" fill="#333" />
      <path d="M1886 412A14 14 0 0 0 1914 412" fill="none" stroke="#444" stroke-width="3" />
      <circle cx="1904" cy="405" r="13" fill="none" stroke="#1f8a30" stroke-dasharray="3 1" />
      <text x="1898" y="413" font-size="21" fill="#d8d8d8" font-family=${cad}>D</text>
      <path d="M1895 434H1905L1900 439Z" fill="#333" />
      <line x1="1886" y1="445" x2="1914" y2="445" stroke="#555" stroke-width="1.500" />
      <rect x="1886" y="455" width="28" height="30" rx="3" fill="#444b56" />
      <path d="M1890 462H1896M1904 462H1910M1890 469H1896M1904 469H1910M1890 476H1896M1904 476H1910" stroke="#7a8290" stroke-width="2" />
      <text transform="translate(1882 518) scale(0.55 1.3)" font-size="32" font-weight="100" fill="#e0e0e0" font-family="Noto Sans CJK SC, sans-serif">样车</text>

      <rect x="1909" y="753" width="14" height="72" rx="3" fill="#2e323c" />
      <path d="M1913 757V775" stroke="#4a4e58" stroke-width="4" stroke-dasharray="1 2" />
      <path d="M1913 776V795" stroke="#d0b030" stroke-width="4" stroke-dasharray="1 2" />
      <path d="M1913 795V820" stroke="#30c0a0" stroke-width="4" stroke-dasharray="1 2" />
    `
  }

  private renderStatus() {
    return html`
      <div class="status">
        <div class="st-a">X = 61392 Y = 38888</div>
        <div class="st-b">层高 : 3.8</div>
        <div class="st-c">标高 : -9.45~--5.65</div>
        <div class="st-d">1(1)</div>
        <div class="st-e">隐藏:&nbsp;&nbsp;&nbsp;&nbsp;0</div>
        <div class="sbtn" style="width:32px">
          <svg width="16" height="24" viewBox="0 0 16 24"><path d="M2 2V20H15M2 16H7V20" fill="none" stroke="#555" /></svg>
        </div>
        <div class="sbtn on" style="width:44px">
          <svg width="18" height="20" viewBox="0 0 18 20"><rect x="2.500" y="3.500" width="14" height="16" fill="#fff" stroke="#6ea6e2" /><rect width="5" height="6" fill="#f5a05a" /></svg>
          <svg width="7" height="5" viewBox="0 0 7 5"><path d="M0 0H7L3.500 4Z" fill="#555" /></svg>
        </div>
        <div class="sbtn" style="width:31px">
          <svg width="20" height="22" viewBox="0 0 20 22"><path d="M1 1L19 21M19 1L1 21" stroke="#999" /><circle cx="10" cy="11" r="2" fill="#777" /></svg>
        </div>
        <div class="sbtn" style="width:45px">
          <svg width="20" height="16" viewBox="0 0 20 16"><path d="M1 15H20M1 15L14 1" fill="none" stroke="#555" /><circle cx="8" cy="9" r="2" fill="#333" /></svg>
          <svg width="7" height="5" viewBox="0 0 7 5"><path d="M0 0H7L3.500 4Z" fill="#555" /></svg>
        </div>
        <div class="sbtn" style="width:44px">
          <svg width="20" height="18" viewBox="0 0 20 18"><path d="M0 4H8M4 0V8" stroke="#333" stroke-width="1.300" /><rect x="8" y="11" width="12" height="6" fill="#333" /></svg>
          <svg width="7" height="5" viewBox="0 0 7 5"><path d="M0 0H7L3.500 4Z" fill="#555" /></svg>
        </div>
        <div class="sbtn" style="width:91px">跨图层选择</div>
        <div class="sbtn" style="width:76px">折线选择</div>
        <span>按鼠标左键指定第一个角点，或拾取构件图元</span>
        <span class="fps">1000 FPS</span>
      </div>
    `
  }

  private renderTaskbar() {
    return html`
      <div class="taskbar">
        <div class="cell">
          <svg width="22" height="22" viewBox="0 0 22 22"><path d="M0 3L9.500 1.700V10.500H0ZM10.500 1.500L22 0V10.500H10.500ZM0 11.500H9.500V20.300L0 19ZM10.500 11.500H22V22L10.500 20.500Z" fill="#fff" /></svg>
        </div>
        <div class="cell">
          <svg width="22" height="22" viewBox="0 0 22 22"><circle cx="13" cy="9" r="7.500" fill="none" stroke="#fff" stroke-width="1.300" /><path d="M8 15L1 21" stroke="#fff" stroke-width="1.500" /></svg>
        </div>
        <div class="cell">
          <svg width="21" height="22" viewBox="0 0 21 22"><rect x="1" y="7" width="13" height="9" fill="none" stroke="#fff" stroke-width="1.300" /><path d="M1 3H14M1 20H14M1 1V3M14 1V3M1 18V20M14 18V20M19 3V7M19 10V13M19 16V20" stroke="#fff" stroke-width="1.300" fill="none" /></svg>
        </div>
        <div class="cell">
          <svg width="28" height="26" viewBox="0 0 28 26"><path d="M0 2H12L14 5V8H0Z" fill="#e09a10" /><rect y="5" width="28" height="21" rx="1" fill="#fbd75c" /><path d="M9 15H19V23H9Z" fill="#3b8fd8" /><rect x="12" y="20" width="4" height="3" fill="#fbd75c" /></svg>
        </div>
        <div class="cell">
          <svg width="31" height="31" viewBox="0 0 31 31">
            <defs><linearGradient id="edge" x1="0" y1="0" x2="1" y2="1"><stop offset="0" stop-color="#2fc6a8" /><stop offset="1" stop-color="#8ae04c" /></linearGradient></defs>
            <circle cx="15.500" cy="15.500" r="15" fill="url(#edge)" />
            <path d="M1 14Q4 1 16 1Q27 1 30 14Q30 20 22 19Q14 18 10 22Q9 27 17 31Q3 31 1 18Z" fill="#1478c8" />
            <path d="M30 16Q30 9 20 9Q10 10 10 20Q12 29 24 28Q14 26 16 20Q19 17 24 19Q29 20 30 16Z" fill="#25b8d8" />
          </svg>
        </div>
        <div class="cell">
          <svg width="30" height="30" viewBox="0 0 30 30">
            <circle cx="13" cy="13" r="10" fill="none" stroke="#1c9cf4" stroke-width="6" />
            <path d="M15 26Q15 20 20 20Q25 17 27 22Q30 23 29 26Z" fill="#fff" />
          </svg>
        </div>
        <div class="cell">${taskApp()}</div>
        <div class="cell on">${taskApp()}</div>
        <div class="cell">
          <svg width="30" height="30" viewBox="0 0 30 30"><rect width="30" height="30" rx="3" fill="#1558a8" stroke="#888" /><text x="15" y="20" text-anchor="middle" font-size="12" font-weight="700" fill="#cfe4fb" font-family="Liberation Sans, sans-serif">CAD</text></svg>
        </div>
        <div class="tray">
          <div><svg width="16" height="9" viewBox="0 0 16 9"><path d="M1 8L8 1L15 8" fill="none" stroke="#fff" stroke-width="1.200" /></svg></div>
          <div><svg width="22" height="20" viewBox="0 0 22 20"><ellipse cx="8" cy="8" rx="8" ry="7" fill="#2fd06a" /><ellipse cx="15.500" cy="13" rx="6" ry="5.500" fill="#ddd" /></svg></div>
          <div>
            <svg width="16" height="22" viewBox="0 0 16 22"><ellipse cx="8" cy="11" rx="6.500" ry="10.500" fill="#111" /><ellipse cx="8" cy="15" rx="4.500" ry="6" fill="#fff" /><path d="M2 10H14L12 14H10L9 17H7V13H2Z" fill="#e02020" /><path d="M4 21H8M8 21H12" stroke="#f0a020" stroke-width="2" /><ellipse cx="8" cy="8" rx="2.500" ry="1.200" fill="#f0a020" /></svg>
          </div>
          <div><svg width="20" height="14" viewBox="0 0 20 14"><rect x="3.500" y="3.500" width="16" height="10" fill="none" stroke="#fff" /><rect x="5" y="5" width="13" height="7" fill="#fff" /><rect width="4" height="5" fill="#fff" /></svg></div>
          <div><svg width="18" height="16" viewBox="0 0 18 16"><path d="M1 15Q2 6 12 1M5 15Q6 9 13 5M9 15Q9 11 14 9" fill="none" stroke="#ddd" /><circle cx="14" cy="14" r="1.500" fill="#fff" /></svg></div>
          <div><svg width="20" height="18" viewBox="0 0 20 18"><path d="M1 6H4L8 2V16L4 12H1Z" fill="none" stroke="#fff" /><path d="M11 6Q13 9 11 12M14 3Q18 9 14 15M17 1Q22 9 17 17" fill="none" stroke="#999" /></svg></div>
          <div>中</div>
          <div class="sogou"><svg width="20" height="20" viewBox="0 0 20 20"><rect x="1" y="1" width="18" height="18" rx="3" fill="#f05a22" transform="rotate(-8 10 10)" /><path d="M15 6H7V10H14V15H5" fill="none" stroke="#fff" stroke-width="2.600" /></svg></div>
          <div class="clock">17:44<br />2021/7/11</div>
          <div class="note">
            <svg width="20" height="20" viewBox="0 0 20 20"><path d="M0 0H20V16H8L3 20V16H0Z" fill="#fff" /><path d="M4 5H16M4 8H16M4 11H16" stroke="#555" /></svg>
            <span class="badge">1</span>
          </div>
        </div>
      </div>
    `
  }

  private renderDialog() {
    return html`
      <div class="dialog">
        <div class="dlg-title">
          <span>校核梁图元</span>
          <svg width="11" height="11" viewBox="0 0 11 11"><path d="M1 1L10 10M10 1L1 10" stroke="#fff" stroke-width="1.800" /></svg>
        </div>
        <div class="dlg-checks">
          ${checks.map(
            ([label, on]) => html`
              <div class="chk">
                <div class="box ${on ? 'on' : ''}">
                  ${on ? html`<svg width="11" height="9" viewBox="0 0 11 9"><path d="M1 4L4.500 7.500L10 1" fill="none" stroke="#fff" stroke-width="1.800" /></svg>` : null}
                </div>
                <span>${label}</span>
              </div>
            `,
          )}
        </div>
        <div class="dlg-table">
          <div class="d-head"><div>名称</div><div>楼层</div><div>问题描述</div><div></div></div>
          ${issues.map(
            ([a, b, c], i) => html`<div class="d-row ${i === 0 ? 'sel' : ''}"><span>${a}</span><span>${b}</span><span>${c}</span></div>`,
          )}
        </div>
        <div class="d-foot"><div class="refresh">刷新</div></div>
        <svg class="grip" width="9" height="9" viewBox="0 0 9 9"><path d="M7 0H9V2H7ZM4 3H6V5H4ZM7 3H9V5H7ZM1 6H3V8H1ZM4 6H6V8H4ZM7 6H9V8H7Z" fill="#777" /></svg>
      </div>
    `
  }

  render() {
    return html`
      ${this.renderTop()}
      <div class="main">
        ${this.renderLeft()} ${this.renderMid()}
        <div class="canvas">
          <svg width="1325" height="782" viewBox="595 210 1325 782">${this.renderCad()}</svg>
          <div class="float">
            <div class="float-head"><b>×</b></div>
            <div class="float-btns">
              <div class="float-btn">提取边线</div>
              <div class="float-btn">自动提取标注<i></i></div>
              <div class="float-btn">点选识别梁<i></i></div>
            </div>
          </div>
        </div>
      </div>
      ${this.renderStatus()} ${this.renderTaskbar()} ${this.renderDialog()}
    `
  }
}
